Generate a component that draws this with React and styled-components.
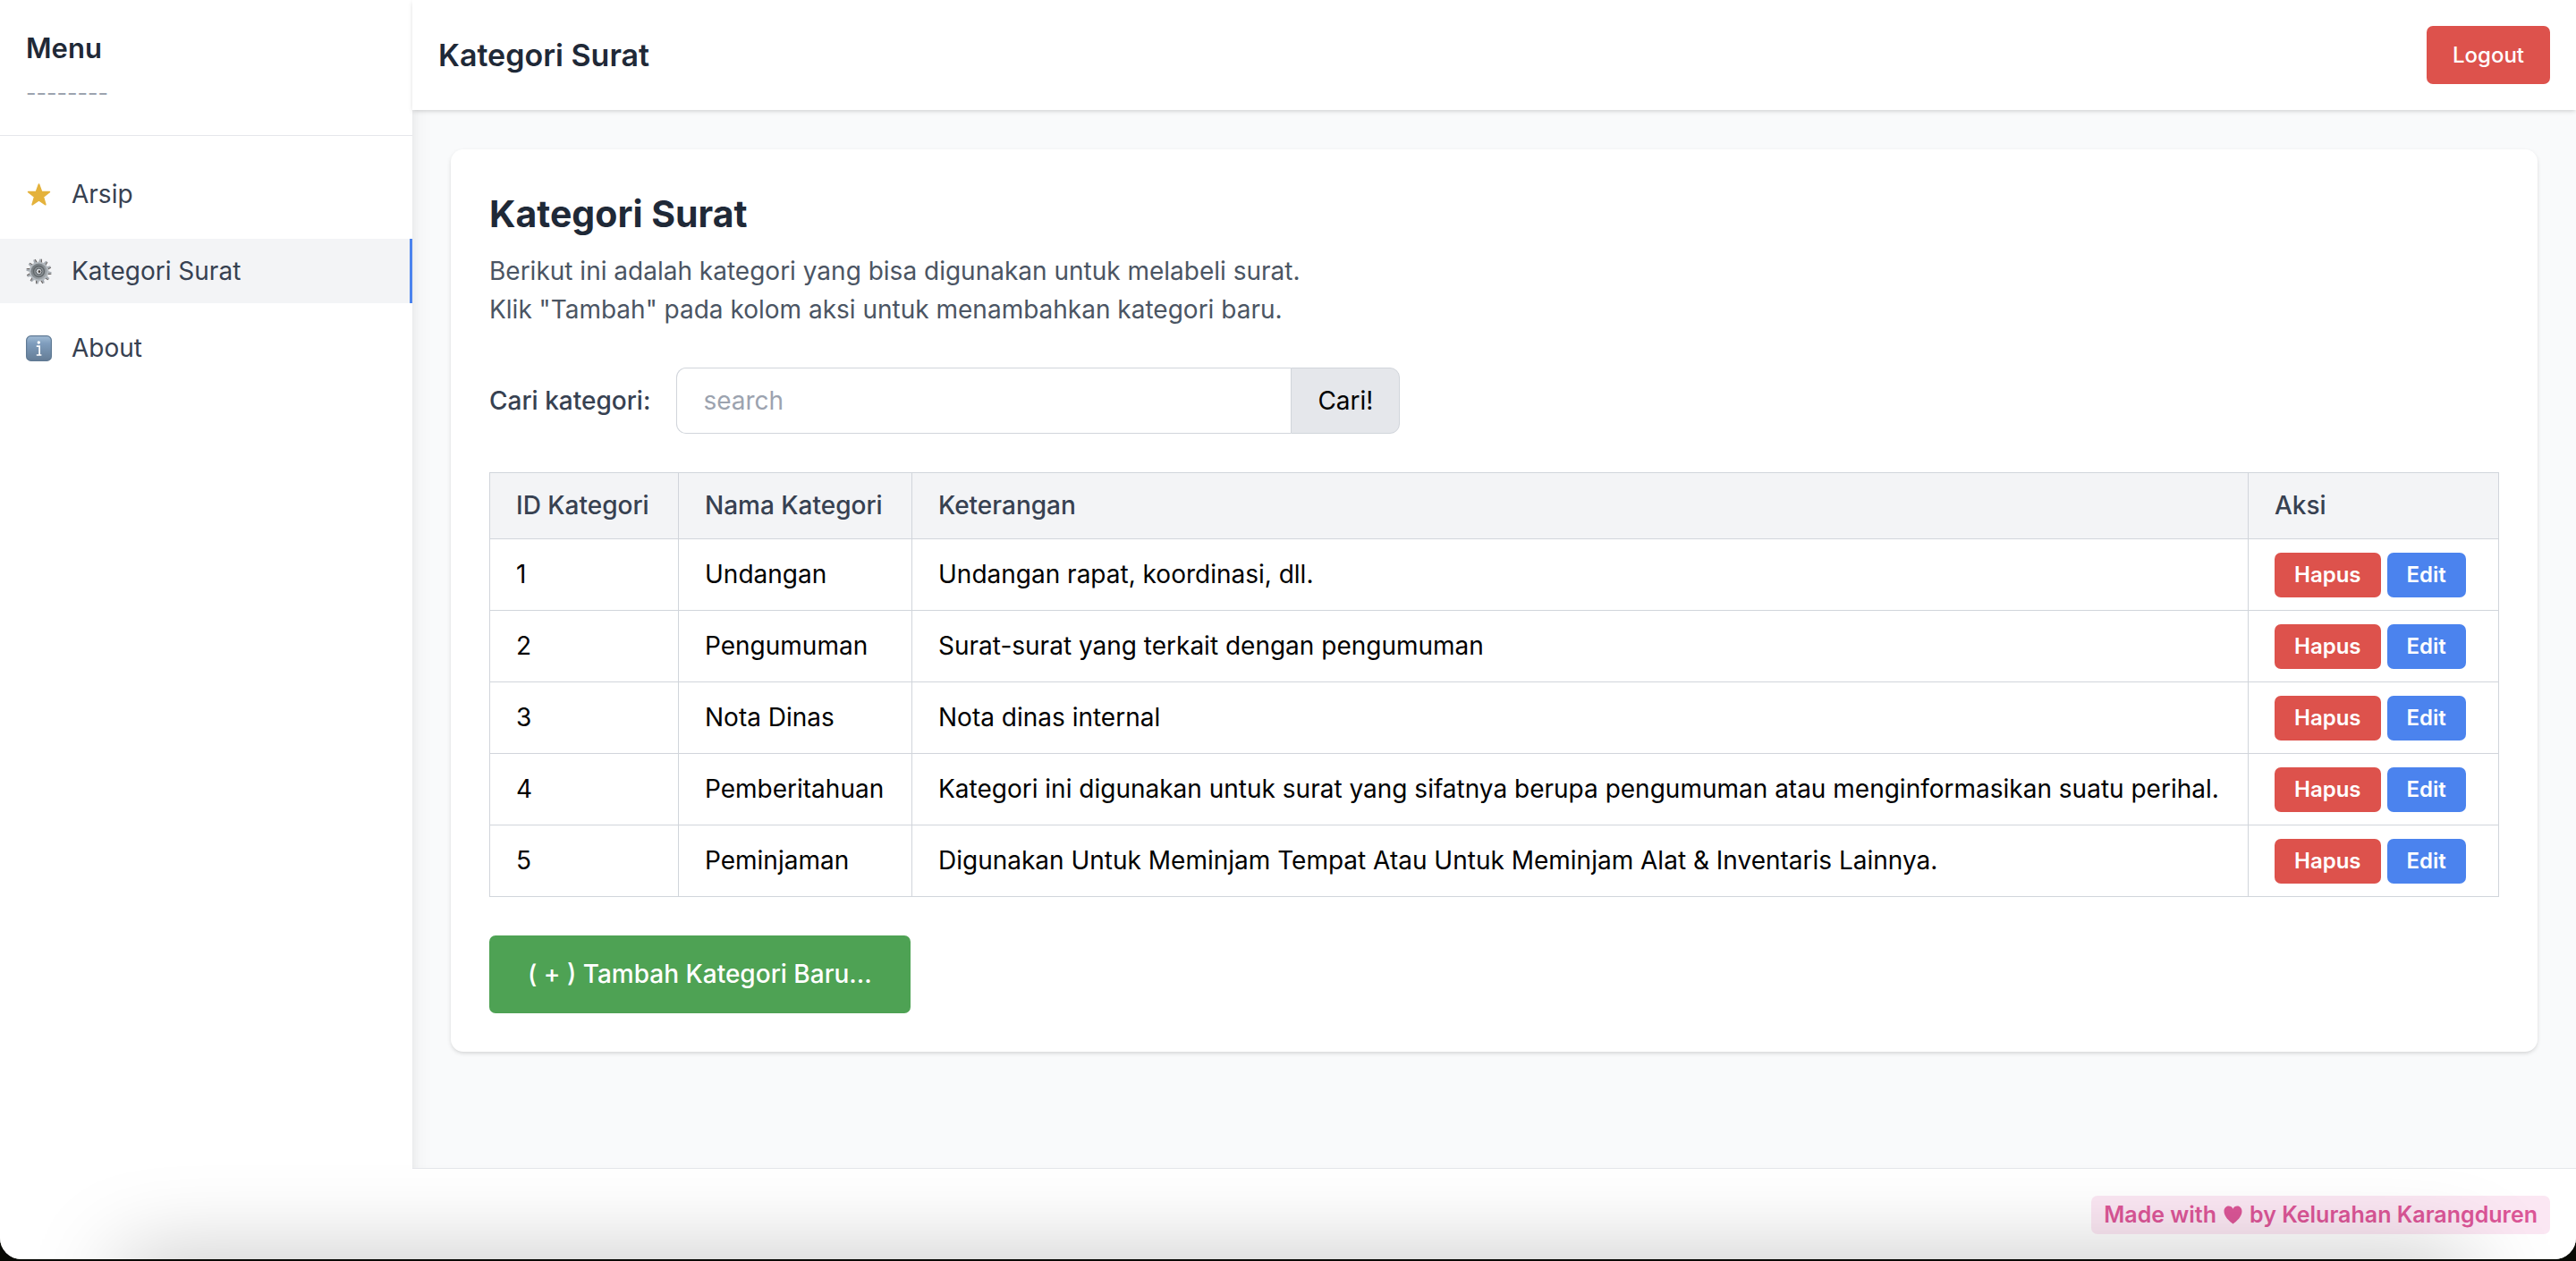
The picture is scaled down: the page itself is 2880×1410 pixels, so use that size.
import React from 'react';
import styled, { createGlobalStyle } from 'styled-components';

const GlobalStyle = createGlobalStyle`
  *, *::before, *::after { box-sizing: border-box; }
  body {
    margin: 0;
    background: #080904;
    font-family: Inter, "Liberation Sans", sans-serif;
    font-size: 28px;
    line-height: 43px;
    color: #000;
  }
  h1, h2, p, ul { margin: 0; padding: 0; }
  button, input { font: inherit; }
`;

const Desktop = styled.div`
  min-height: 100vh;
  padding-bottom: 2px;
  display: flex;
`;

const Window = styled.div`
  position: relative;
  flex: 1;
  display: flex;
  min-width: 0;
  overflow: hidden;
  background: #f9fafb;
  border-radius: 0 0 24px 24px;
`;

const DockShadow = styled.div`
  position: absolute;
  z-index: 5;
  left: 136px;
  right: 120px;
  top: 100%;
  height: 80px;
  box-shadow: 0 0 100px rgba(0, 0, 0, 0.25);
  pointer-events: none;
`;

const Sidebar = styled.aside`
  position: relative;
  z-index: 1;
  flex: none;
  width: 461px;
  background: #fff;
  box-shadow: 0 18px 27px -5px rgba(0, 0, 0, 0.1), 0 7px 11px -4px rgba(0, 0, 0, 0.1);
`;

const MenuHead = styled.div`
  padding: 29px;
  border-bottom: 1px solid #e5e7eb;
`;

const MenuTitle = styled.h2`
  font-size: 31px;
  line-height: 50px;
  font-weight: 600;
  color: #1f2937;
`;

const MenuRule = styled.p`
  margin-top: 7px;
  font-size: 25px;
  line-height: 36px;
  color: #9ca3af;
`;

const NavList = styled.ul`
  list-style: none;
  padding-top: 29px;
  display: flex;
  flex-direction: column;
  gap: 14px;
`;

const NavLink = styled.a`
  display: flex;
  align-items: center;
  gap: 22px;
  height: 72px;
  padding: 0 29px;
  color: #374151;
  text-decoration: none;
  background: ${(p) => (p.$active ? '#f3f4f6' : 'transparent')};
  border-right: 3px solid ${(p) => (p.$active ? '#4b83ee' : 'transparent')};

  svg { flex: none; display: block; }
`;

const Page = styled.div`
  flex: 1;
  min-width: 0;
  display: flex;
  flex-direction: column;
`;

const Header = styled.header`
  position: relative;
  z-index: 2;
  display: flex;
  align-items: center;
  justify-content: space-between;
  padding: 29px;
  background: #fff;
  box-shadow: 0 2px 5px rgba(0, 0, 0, 0.1), 0 2px 4px -2px rgba(0, 0, 0, 0.1);
`;

const HeaderTitle = styled.h1`
  font-size: 34px;
  line-height: 50px;
  font-weight: 600;
  color: #1f2937;
`;

const colours = { red: '#dd524c', blue: '#4b83ee', green: '#4ea254' };

const Button = styled.button`
  border: 0;
  border-radius: 7px;
  color: #fff;
  font-weight: 500;
  cursor: pointer;
  background: ${(p) => colours[p.$tone]};
`;

const LogoutButton = styled(Button)`
  padding: 14px 29px;
  font-size: 24px;
  line-height: 37px;
`;

const SmallButton = styled(Button)`
  padding: 7px 22px;
  font-size: 24px;
  line-height: 36px;
  font-weight: 600;
`;

const AddButton = styled(Button)`
  margin-top: 43px;
  padding: 22px 43px;
`;

const Main = styled.main`
  flex: 1;
  padding: 44px 43px;
`;

const Card = styled.section`
  padding: 43px;
  background: #fff;
  border-radius: 14px;
  box-shadow: 0 2px 5px rgba(0, 0, 0, 0.1), 0 2px 4px -2px rgba(0, 0, 0, 0.1);
`;

const CardTitle = styled.h2`
  font-size: 41px;
  line-height: 58px;
  font-weight: 700;
  color: #1f2937;
`;

const Description = styled.p`
  margin-top: 14px;
  color: #4b5563;
`;

const SearchForm = styled.form`
  display: flex;
  align-items: center;
  margin: 43px 0;
`;

const SearchLabel = styled.label`
  margin-right: 29px;
  font-weight: 500;
  color: #374151;
`;

const SearchInput = styled.input`
  width: 687px;
  height: 74px;
  padding: 0 29px;
  border: 1px solid #d1d5db;
  border-right: 0;
  border-radius: 11px 0 0 11px;
  background: #fff;
  outline: none;

  &::placeholder { color: #9ca3af; opacity: 1; }
`;

const SearchButton = styled.button`
  height: 74px;
  padding: 0 29px;
  border: 1px solid #d1d5db;
  border-radius: 0 11px 11px 0;
  background: #e5e7eb;
  color: #000;
  cursor: pointer;
`;

const Table = styled.table`
  width: 100%;
  border-collapse: collapse;
`;

const Col = styled.col`
  width: ${(p) => p.$width};
`;

const Th = styled.th`
  height: 74px;
  padding: 0 29px;
  border: 1px solid #d1d5db;
  background: #f3f4f6;
  color: #374151;
  font-weight: 500;
  text-align: left;
  white-space: nowrap;
`;

const Td = styled.td`
  height: 80px;
  padding: 0 29px;
  border: 1px solid #d1d5db;
`;

const Actions = styled.div`
  display: flex;
  gap: 7px;
`;

const Footer = styled.footer`
  position: relative;
  z-index: 2;
  display: flex;
  justify-content: flex-end;
  padding: 30px 29px 28px;
  background: #fff;
  border-top: 1px solid #e5e7eb;
`;

const Credit = styled.p`
  display: flex;
  align-items: center;
  gap: 8px;
  padding: 0 14px;
  border-radius: 7px;
  background: #fbe7f3;
  color: #db5697;
  font-size: 25px;
  font-weight: 600;
`;

const StarIcon = () => (
  <svg width="29" height="29" viewBox="0 0 29 29" aria-hidden="true">
    <path
      d="M14.5 3l3 8.300 8.900.300-7 5.500 2.500 8.700-7.400-5-7.400 5 2.500-8.700-7-5.500 8.900-.300z"
      fill="#e4b23c"
      stroke="#e4b23c"
      strokeWidth="1.6"
      strokeLinejoin="round"
    />
  </svg>
);

const GearIcon = () => (
  <svg width="29" height="29" viewBox="0 0 29 29" aria-hidden="true">
    <defs>
      <linearGradient id="gearBody" x1="0" y1="0" x2="1" y2="1">
        <stop offset="0" stopColor="#6a7074" />
        <stop offset="1" stopColor="#a9afb4" />
      </linearGradient>
    </defs>
    {Array.from({ length: 12 }, (_, i) => (
      <g key={i} transform={`rotate(${i * 30 + 8} 14.5 14.5)`}>
        <path d="M12.7 5l.7-4.6h2.2l.7 4.6z" fill="#a5abb1" />
        <path d="M15.2.4h.8l.7 4.6h-1.2z" fill="#665f5c" />
      </g>
    ))}
    <circle cx="14.5" cy="14.5" r="10.8" fill="#b3b9be" />
    <circle cx="14.5" cy="14.5" r="9" fill="url(#gearBody)" />
    <circle cx="14.5" cy="14.5" r="6" fill="#8b9195" stroke="#60666a" strokeWidth="1.4" />
    <circle cx="14.5" cy="14.5" r="3.4" fill="#d4d8dc" stroke="#53585c" strokeWidth="1" />
    <circle cx="15" cy="14.7" r="1.4" fill="#4a4542" />
  </svg>
);

const InfoIcon = () => (
  <svg width="29" height="29" viewBox="0 0 29 29" aria-hidden="true">
    <defs>
      <linearGradient id="infoFace" x1="0" y1="0" x2="0" y2="1">
        <stop offset="0" stopColor="#a3bdd6" />
        <stop offset="0.3" stopColor="#7f9dbd" />
        <stop offset="1" stopColor="#647c95" />
      </linearGradient>
    </defs>
    <rect x="0.6" y="0.6" width="27.8" height="27.8" rx="5" fill="url(#infoFace)" stroke="#607a94" strokeWidth="1.2" />
    <circle cx="14.3" cy="8" r="1.7" fill="#fff" />
    <path d="M11.8 12.2h3.3v9.6M11.800 22h5.600" fill="none" stroke="#fff" strokeWidth="1.7" />
  </svg>
);

const HeartIcon = () => (
  <svg width="21" height="21" viewBox="0 0 21 21" role="img" aria-label="love">
    <path
      d="M10.5 20.5C6.5 17.2.5 12.6.5 6.4.5 3 2.8.6 5.6.6c2.2 0 4 1.2 4.9 3.2C11.4 1.8 13.2.6 15.4.6c2.8 0 5.1 2.4 5.1 5.8 0 6.2-6 10.8-10 14.1z"
      fill="#db5697"
    />
  </svg>
);

const menu = [
  { label: 'Arsip', icon: <StarIcon /> },
  { label: 'Kategori Surat', icon: <GearIcon />, active: true },
  { label: 'About', icon: <InfoIcon /> },
];

const categories = [
  { id: 1, name: 'Undangan', note: 'Undangan rapat, koordinasi, dll.' },
  { id: 2, name: 'Pengumuman', note: 'Surat-surat yang terkait dengan pengumuman' },
  { id: 3, name: 'Nota Dinas', note: 'Nota dinas internal' },
  {
    id: 4,
    name: 'Pemberitahuan',
    note: 'Kategori ini digunakan untuk surat yang sifatnya berupa pengumuman atau menginformasikan suatu perihal.',
  },
  {
    id: 5,
    name: 'Peminjaman',
    note: 'Digunakan Untuk Meminjam Tempat Atau Untuk Meminjam Alat & Inventaris Lainnya.',
  },
];

export default function App() {
  return (
    <Desktop>
      <GlobalStyle />
      <Window>
        <Sidebar>
          <MenuHead>
            <MenuTitle>Menu</MenuTitle>
            <MenuRule>--------</MenuRule>
          </MenuHead>
          <nav>
            <NavList>
              {menu.map((item) => (
                <li key={item.label}>
                  <NavLink href="#" $active={item.active} aria-current={item.active ? 'page' : undefined}>
                    {item.icon}
                    <span>{item.label}</span>
                  </NavLink>
                </li>
              ))}
            </NavList>
          </nav>
        </Sidebar>
        <Page>
          <Header>
            <HeaderTitle>Kategori Surat</HeaderTitle>
            <LogoutButton type="button" $tone="red">Logout</LogoutButton>
          </Header>
          <Main>
            <Card>
              <CardTitle>Kategori Surat</CardTitle>
              <Description>
                Berikut ini adalah kategori yang bisa digunakan untuk melabeli surat.
                <br />
                Klik "Tambah" pada kolom aksi untuk menambahkan kategori baru.
              </Description>
              <SearchForm onSubmit={(e) => e.preventDefault()}>
                <SearchLabel htmlFor="search">Cari kategori:</SearchLabel>
                <SearchInput id="search" type="text" placeholder="search" />
                <SearchButton type="submit">Cari!</SearchButton>
              </SearchForm>
              <Table>
                <colgroup>
                  <Col $width="211px" />
                  <Col $width="261px" />
                  <Col $width="auto" />
                  <Col $width="280px" />
                </colgroup>
                <thead>
                  <tr>
                    <Th>ID Kategori</Th>
                    <Th>Nama Kategori</Th>
                    <Th>Keterangan</Th>
                    <Th>Aksi</Th>
                  </tr>
                </thead>
                <tbody>
                  {categories.map((row) => (
                    <tr key={row.id}>
                      <Td>{row.id}</Td>
                      <Td>{row.name}</Td>
                      <Td>{row.note}</Td>
                      <Td>
                        <Actions>
                          <SmallButton type="button" $tone="red">Hapus</SmallButton>
                          <SmallButton type="button" $tone="blue">Edit</SmallButton>
                        </Actions>
                      </Td>
                    </tr>
                  ))}
                </tbody>
              </Table>
              <AddButton type="button" $tone="green">( + ) Tambah Kategori Baru...</AddButton>
            </Card>
          </Main>
          <Footer>
            <Credit>
              <span>Made with</span>
              <HeartIcon />
              <span>by Kelurahan Karangduren</span>
            </Credit>
          </Footer>
        </Page>
        <DockShadow />
      </Window>
    </Desktop>
  );
}
